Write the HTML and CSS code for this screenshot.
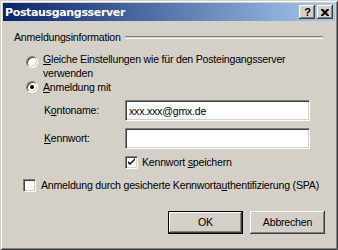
FILE: index.html
```html
<!DOCTYPE html>
<html>
<head>
<meta charset="utf-8">
<link rel="stylesheet" href="styles.css">
</head>
<body>
<div class="window">
  <div class="titlebar">
    <span class="title">Postausgangsserver</span>
    <div class="tbtns">
      <span class="tbtn help">?</span>
      <span class="tbtn close"><svg width="8" height="7" viewBox="0 0 8 7"><path d="M0 0h2l2 2 2-2h2v1l-2.5 2.5L8 6v1H6L4 5 2 7H0V6l2.5-2.5L0 1z" fill="#000"/></svg></span>
    </div>
  </div>
  <div class="content">
    <div class="group-head"><span>Anmeldungsinformation</span><div class="etch"></div></div>
    <div class="opt r1"><span class="radio"></span><span class="lbl"><u>G</u>leiche Einstellungen wie für den Posteingangsserver<br>verwenden</span></div>
    <div class="opt r2"><span class="radio on"></span><span class="lbl"><u>A</u>nmeldung mit</span></div>
    <div class="field f1"><span class="flabel">K<u>o</u>ntoname:</span><div class="input">xxx.xxx@gmx.de</div></div>
    <div class="field f2"><span class="flabel"><u>K</u>ennwort:</span><div class="input"></div></div>
    <div class="opt save"><span class="check"><svg width="9" height="9" viewBox="0 0 9 9"><path d="M1 3v2l2 2 5-5V0L3 5z" fill="#000"/></svg></span><span class="lbl">Kennwort <u>s</u>peichern</span></div>
    <div class="opt spa"><span class="check"></span><span class="lbl">Anmeldung durch gesicherte Kennworta<u>u</u>thentifizierung (SPA)</span></div>
    <div class="buttons"><span class="btn default"><span>OK</span></span><span class="btn"><span>Abbrechen</span></span></div>
  </div>
</div>
</body>
</html>
```

FILE: styles.css
```css
html, body { margin: 0; padding: 0; }
body {
  font-family: "Liberation Sans", Arial, sans-serif;
  font-size: 10.6px;
  letter-spacing: -0.22px;
  line-height: 13px;
  color: #000;
  background: #d4d0c8;
}
.window {
  width: 338px;
  height: 250px;
  box-sizing: border-box;
  padding: 3px;
  background: #d4d0c8;
  box-shadow: inset 1px 1px #d4d0c8, inset -1px -1px #404040, inset 2px 2px #ffffff, inset -2px -2px #808080;
  display: flex;
  flex-direction: column;
}
.titlebar {
  height: 18px;
  background: linear-gradient(to right, #0a246a, #a6caf0);
  display: flex;
  align-items: center;
  justify-content: space-between;
}
.title {
  color: #fff;
  font-weight: bold;
  font-family: "DejaVu Sans", sans-serif;
  font-size: 11px;
  padding-left: 2px;
  letter-spacing: -0.35px;
}
.tbtns { display: flex; gap: 2px; padding-right: 2px; }
.tbtn {
  width: 16px;
  height: 14px;
  box-sizing: border-box;
  background: #d4d0c8;
  box-shadow: inset -1px -1px #404040, inset 1px 1px #ffffff, inset -2px -2px #808080, inset 2px 2px #d4d0c8;
  display: flex;
  align-items: center;
  justify-content: center;
}
.help { font-weight: bold; font-size: 11px; line-height: 14px; padding-left: 1px; letter-spacing: 0; }
.close svg { display: block; }
.content { display: flex; flex-direction: column; }
.group-head {
  margin-top: 10px;
  margin-left: 11px;
  margin-right: 12px;
  height: 13px;
  display: flex;
  align-items: center;
}
.etch {
  flex: 1;
  margin-left: 4px;
  height: 1px;
  border-top: 1px solid #808080;
  border-bottom: 1px solid #ffffff;
}
.opt { display: flex; align-items: flex-start; }
.radio {
  width: 12px;
  height: 12px;
  box-sizing: border-box;
  border-radius: 50%;
  border: 1px solid;
  border-color: #808080 #ffffff #ffffff #808080;
  background: #fff;
  box-shadow: inset 1px 1px #404040, inset -1px -1px #d4d0c8;
  position: relative;
  flex: none;
}
.radio.on::after {
  content: "";
  position: absolute;
  left: 3px;
  top: 3px;
  width: 4px;
  height: 4px;
  border-radius: 50%;
  background: #000;
}
.r1 { margin-top: 8px; margin-left: 23px; line-height: 14px; }
.r1 .radio { margin-top: 4px; }
.r1 .lbl { margin-left: 5px; }
.r2 { margin-top: 1px; margin-left: 23px; }
.r2 .lbl { margin-left: 5px; }
.field { display: flex; align-items: center; margin-left: 41px; }
.f1 { margin-top: 6px; }
.f2 { margin-top: 7px; }
.flabel { width: 81px; }
.input {
  width: 185px;
  height: 21px;
  box-sizing: border-box;
  background: #fff;
  border: 1px solid;
  border-color: #808080 #ffffff #ffffff #808080;
  box-shadow: inset 1px 1px #404040, inset -1px -1px #d4d0c8;
  padding: 3px 3px 0 3px;
  line-height: 14px;
}
.check {
  width: 13px;
  height: 13px;
  box-sizing: border-box;
  border: 1px solid;
  border-color: #808080 #ffffff #ffffff #808080;
  background: #fff;
  box-shadow: inset 1px 1px #404040, inset -1px -1px #d4d0c8;
  display: flex;
  align-items: center;
  justify-content: center;
  flex: none;
}
.check svg { display: block; }
.save { margin-top: 7px; margin-left: 122px; align-items: center; }
.save .lbl { margin-left: 4px; }
.spa { margin-top: 10px; margin-left: 20px; align-items: center; }
.spa .lbl { margin-left: 5px; white-space: nowrap; }
.buttons {
  margin-top: 19px;
  display: flex;
  justify-content: flex-end;
  gap: 7px;
  padding-right: 10px;
}
.btn {
  width: 75px;
  height: 23px;
  box-sizing: border-box;
  background: #d4d0c8;
  box-shadow: inset -1px -1px #404040, inset 1px 1px #ffffff, inset -2px -2px #808080, inset 2px 2px #d4d0c8;
  display: flex;
  align-items: center;
  justify-content: center;
}
.btn.default {
  border: 1px solid #000;
}
```
